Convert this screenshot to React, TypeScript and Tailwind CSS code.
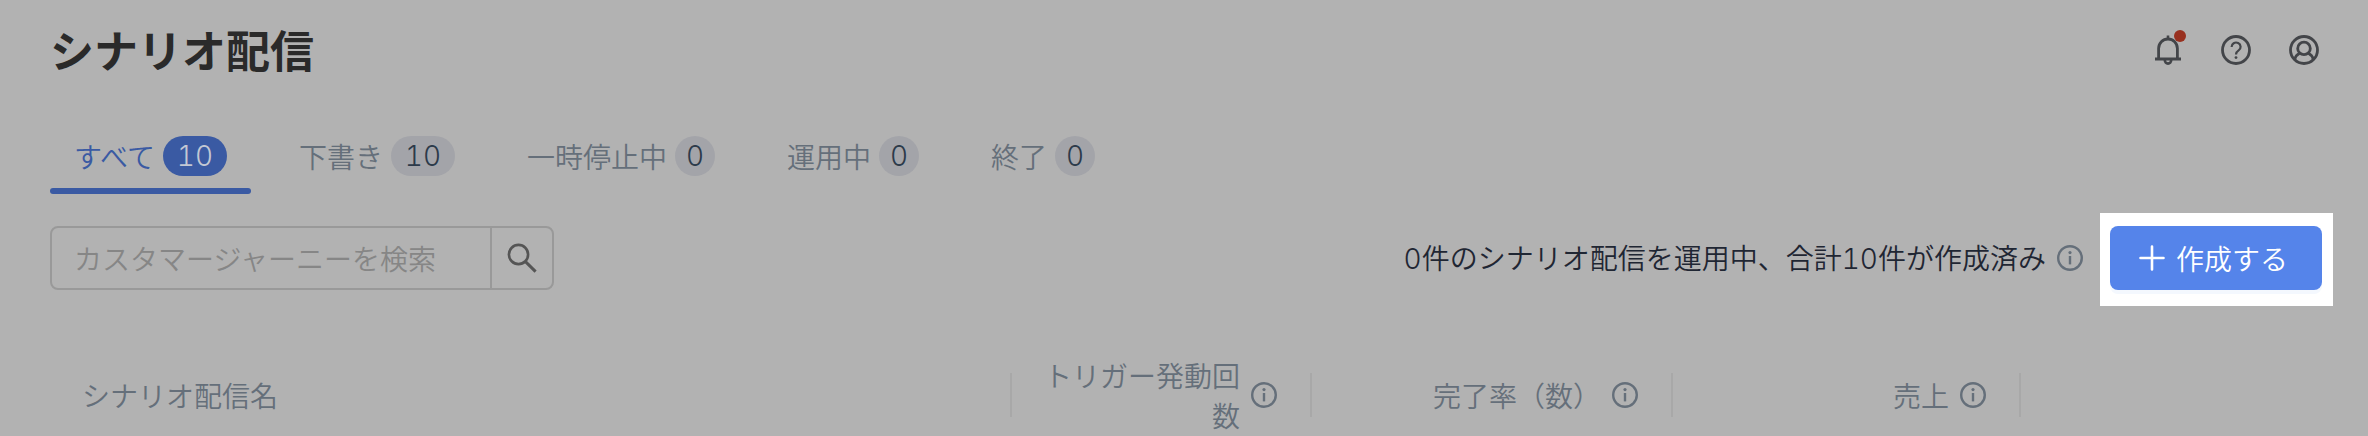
import type { ReactNode } from "react";

const tabs = [
  { label: "すべて", count: 10, active: true },
  { label: "下書き", count: 10, active: false },
  { label: "一時停止中", count: 0, active: false },
  { label: "運用中", count: 0, active: false },
  { label: "終了", count: 0, active: false },
];

function Digits({ children }: { children: ReactNode }) {
  return <span className="font-['Inter','Noto_Sans_CJK_JP',sans-serif] tabular-nums">{children}</span>;
}

function InfoIcon() {
  return (
    <svg viewBox="0 0 26 26" className="h-[26px] w-[26px] shrink-0 text-[#656f7a]" fill="none" aria-hidden="true">
      <circle cx="13" cy="13" r="11.8" stroke="currentColor" strokeWidth="2.4" />
      <circle cx="13" cy="7.6" r="1.6" fill="currentColor" />
      <path d="M13 11v8.4" stroke="currentColor" strokeWidth="2.4" />
    </svg>
  );
}

function BellIcon() {
  return (
    <svg viewBox="0 0 30 30" className="h-[30px] w-[30px]" fill="none" stroke="currentColor" aria-hidden="true">
      <path d="M15 0.5v4" strokeWidth="2.6" />
      <path d="M5.6 24V13.5a9.4 9.5 0 0 1 18.8 0V24" strokeWidth="2.8" />
      <path d="M2 24h26" strokeWidth="3" />
      <path d="M11.8 25a3.2 3.6 0 0 0 6.4 0" strokeWidth="2.6" />
    </svg>
  );
}

function HelpIcon() {
  return (
    <svg viewBox="0 0 30 30" className="h-[30px] w-[30px]" fill="none" stroke="currentColor" aria-hidden="true">
      <circle cx="15" cy="15" r="13.5" strokeWidth="2.8" />
      <path d="M10.6 12a4.5 4.3 0 1 1 7 3.4c-1.8 1.2-2.6 2-2.6 4.1" strokeWidth="2.2" />
      <circle cx="15" cy="22.6" r="1.4" fill="currentColor" stroke="none" />
    </svg>
  );
}

function UserIcon() {
  return (
    <svg viewBox="0 0 30 30" className="h-[30px] w-[30px]" fill="none" stroke="currentColor" aria-hidden="true">
      <circle cx="15" cy="15" r="13.5" strokeWidth="2.8" />
      <circle cx="15" cy="13.4" r="6.3" strokeWidth="2.8" />
      <path d="M5.6 24.6c.8-3 2.6-5.2 5.2-6.6M24.4 24.6c-.8-3-2.6-5.2-5.2-6.6" strokeWidth="2.8" />
    </svg>
  );
}

function NumberHeader({ children }: { children: ReactNode }) {
  return (
    <th scope="col" className="p-0 font-[350]">
      <div className="flex h-20 items-center">
        <div className="flex flex-1 items-center justify-end gap-[11px] pr-[33px] pl-7 text-right">
          <span>{children}</span>
          <InfoIcon />
        </div>
        <span className="h-11 w-[2px] bg-[#a8a8a8]" />
      </div>
    </th>
  );
}

export default function App() {
  return (
    <div className="min-h-screen overflow-hidden bg-[#b2b2b2] pr-[46px] pl-[50px] font-['Noto_Sans_CJK_JP',sans-serif] text-[28px] leading-10 font-[350]">
      {/* Header */}
      <header className="flex h-[100px] items-center justify-between">
        <h1 className="pb-[2px] text-[44px] leading-[60px] font-bold text-[#2a2a2a]">シナリオ配信</h1>
        <div className="flex items-center gap-[38px] pr-[3px] text-[#434549]">
          <button type="button" aria-label="お知らせ" className="relative block">
            <BellIcon />
            <span className="absolute -top-[5px] -right-[3px] h-3 w-3 rounded-full bg-[#98301f]" />
          </button>
          <button type="button" aria-label="ヘルプ" className="block">
            <HelpIcon />
          </button>
          <button type="button" aria-label="アカウント" className="block">
            <UserIcon />
          </button>
        </div>
      </header>

      {/* Status tabs */}
      <nav className="mt-9 flex gap-6">
        {tabs.map((tab) => (
          <button
            key={tab.label}
            type="button"
            className={tab.active ? "flex flex-col text-[#3a5aa3]" : "flex flex-col text-[#656f7a]"}
          >
            <span className="flex items-center gap-2 px-6">
              {tab.label}
              <span
                className={`flex h-10 items-center justify-center rounded-full ${
                  tab.count >= 10 ? "w-16" : "w-10"
                } ${tab.active ? "bg-[#3a5aa3] text-[#c3c8d4]" : "bg-[#a3a4a9] text-[#2c3a4a]"}`}
              >
                <Digits>{tab.count}</Digits>
              </span>
            </span>
            {tab.active && <span className="mt-3 h-[6px] w-full rounded-full bg-[#3a5aa3]" />}
          </button>
        ))}
      </nav>

      {/* Search and create */}
      <div className="mt-8 flex items-center justify-between">
        <form className="flex h-16 w-[504px] rounded-lg border-2 border-[#999999]">
          <input
            type="text"
            aria-label="カスタマージャーニーを検索"
            placeholder="カスタマージャーニーを検索"
            className="min-w-0 flex-1 bg-transparent pl-[22px] text-[#333333] outline-none placeholder:text-[#868686]"
          />
          <button
            type="button"
            aria-label="検索"
            className="flex w-[62px] items-center justify-center border-l-2 border-[#999999] text-[#555555]"
          >
            <svg viewBox="0 0 30 30" className="h-[30px] w-[30px]" fill="none" stroke="currentColor" aria-hidden="true">
              <circle cx="11.5" cy="11.5" r="9.6" strokeWidth="2.6" />
              <path d="M18.2 18.4 28.6 28.6" strokeWidth="3" />
            </svg>
          </button>
        </form>

        <div className="flex items-center">
          <p className="text-[#1f2633]">
            <Digits>0</Digits>件のシナリオ配信を運用中、合計<Digits>10</Digits>件が作成済み
          </p>
          <span className="mr-[27px] ml-[11px]">
            <InfoIcon />
          </span>
          <div className="relative">
            {/* Spotlight behind the create button */}
            <span className="absolute -top-[13px] -right-[11px] -bottom-4 -left-[10px] bg-white" />
            <button
              type="button"
              className="relative flex h-16 items-center gap-[10px] rounded-lg bg-[#5584ea] pr-[34px] pl-7 text-white shadow-[0_4px_0_#f4f8fe]"
            >
              <svg viewBox="0 0 28 28" className="h-7 w-7" fill="none" stroke="currentColor" aria-hidden="true">
                <path d="M14 2.5v23M2.5 14h23" strokeWidth="2.6" strokeLinecap="round" />
              </svg>
              作成する
            </button>
          </div>
        </div>
      </div>

      {/* Scenario table */}
      <table className="mt-[65px] w-full table-fixed border-collapse text-[#656f7a]">
        <colgroup>
          <col />
          <col className="w-[300px]" />
          <col className="w-[361px]" />
          <col className="w-[348px]" />
          <col className="w-[301px]" />
        </colgroup>
        <thead>
          <tr>
            <th scope="col" className="p-0 text-left font-[350]">
              <div className="flex h-20 items-center justify-between pl-8">
                シナリオ配信名
                <span className="h-11 w-[2px] bg-[#a8a8a8]" />
              </div>
            </th>
            <NumberHeader>トリガー発動回数</NumberHeader>
            <NumberHeader>完了率（数）</NumberHeader>
            <NumberHeader>売上</NumberHeader>
            <td />
          </tr>
        </thead>
      </table>
    </div>
  );
}
